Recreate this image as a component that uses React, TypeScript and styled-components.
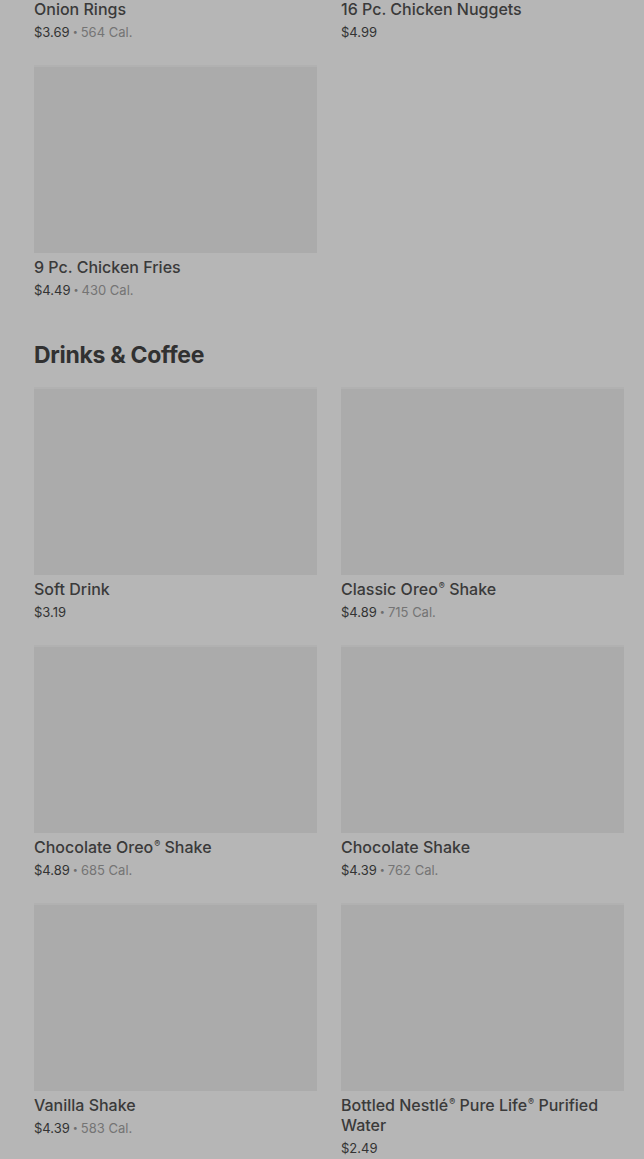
import React from "react";
import styled, { createGlobalStyle } from "styled-components";

const GlobalStyle = createGlobalStyle`
  html, body {
    margin: 0;
    padding: 0;
    background: #b6b6b6;
    overflow: hidden;
  }
  body {
    font-family: "Inter", "Liberation Sans", sans-serif;
    -webkit-font-smoothing: antialiased;
  }
`;

interface Item {
  name: string;
  price: string;
  cal?: string;
}

const sides: Item[] = [
  { name: "Onion Rings", price: "$3.69", cal: "564 Cal." },
  { name: "16 Pc. Chicken Nuggets", price: "$4.99" },
  { name: "9 Pc. Chicken Fries", price: "$4.49", cal: "430 Cal." },
];

const drinks: Item[] = [
  { name: "Soft Drink", price: "$3.19" },
  { name: "Classic Oreo® Shake", price: "$4.89", cal: "715 Cal." },
  { name: "Chocolate Oreo® Shake", price: "$4.89", cal: "685 Cal." },
  { name: "Chocolate Shake", price: "$4.39", cal: "762 Cal." },
  { name: "Vanilla Shake", price: "$4.39", cal: "583 Cal." },
  { name: "Bottled Nestlé® Pure Life® Purified Water", price: "$2.49" },
];

const Page = styled.main`
  padding: 0 20px 0 34px;
  height: 1159px;
  overflow: hidden;
`;

const Grid = styled.div<{ $offset?: number }>`
  display: grid;
  grid-template-columns: 283px 283px;
  column-gap: 24px;
  row-gap: 23px;
  margin-top: ${(p) => p.$offset ?? 0}px;
`;

const SectionTitle = styled.h2`
  margin: 39px 0 16px;
  font-size: 23px;
  line-height: 32px;
  font-weight: 700;
  letter-spacing: -0.3px;
  color: #313131;
`;

const Card = styled.div`
  display: flex;
  flex-direction: column;
`;

const Thumb = styled.div`
  height: 188px;
  background: #ababab;
  box-shadow: inset 0 2px 0 rgba(255, 255, 255, 0.08);
`;

const Name = styled.div`
  margin-top: 4px;
  font-size: 16px;
  line-height: 20px;
  font-weight: 500;
  color: #3a3a3a;
`;

const Reg = styled.span`
  font-size: 9px;
  line-height: 0;
  position: relative;
  top: -6px;
  margin-left: 1px;
`;

const Meta = styled.div`
  margin-top: 3px;
  height: 20px;
  font-size: 13px;
  line-height: 20px;
  color: #333333;
`;

const Dot = styled.span`
  display: inline-block;
  margin: 0 3px;
  font-size: 9px;
  line-height: 0;
  vertical-align: 2px;
  color: #6e6e6e;
`;

const Cal = styled.span`
  color: #747474;
`;

function renderName(name: string) {
  const parts = name.split("®");
  return parts.map((part, i) => (
    <React.Fragment key={i}>
      {part}
      {i < parts.length - 1 && <Reg>®</Reg>}
    </React.Fragment>
  ));
}

function MenuCard({ name, price, cal }: Item) {
  return (
    <Card>
      <Thumb />
      <Name>{renderName(name)}</Name>
      <Meta>
        {price}
        {cal && (
          <>
            <Dot>•</Dot>
            <Cal>{cal}</Cal>
          </>
        )}
      </Meta>
    </Card>
  );
}

export default function App() {
  return (
    <>
      <GlobalStyle />
      <Page>
        <Grid $offset={-193}>
          {sides.map((it) => (
            <MenuCard key={it.name} {...it} />
          ))}
        </Grid>
        <SectionTitle>Drinks &amp; Coffee</SectionTitle>
        <Grid>
          {drinks.map((it) => (
            <MenuCard key={it.name} {...it} />
          ))}
        </Grid>
      </Page>
    </>
  );
}
